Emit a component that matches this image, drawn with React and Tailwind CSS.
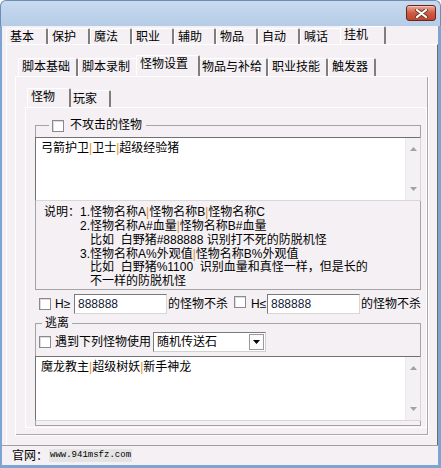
import React from 'react';

// --- Bot settings window (挂机 / 怪物设置 page) ---

const FONT = "font-['Liberation_Sans','Noto_Sans_CJK_SC',sans-serif]";

// renders "a|b|c" with the coloured separators seen in the edit boxes
const Piped = ({ text }) =>
    text.split('|').map((part, i) => (
        <React.Fragment key={i}>
            {i > 0 && <span className="text-[#e0942e]">|</span>}
            {part}
        </React.Fragment>
    ));

const Check = () => (
    <span className="inline-block w-[12px] h-[12px] shrink-0 bg-white border border-[#8a8a8a] shadow-[inset_1px_1px_0_#dcdcdc]" />
);

const ScrollArrows = () => (
    <div className="w-[15px] h-full bg-[#f3f1f3] border-l border-[#ebe8eb] flex flex-col justify-between items-center py-[9px]">
        <svg width="7" height="4" viewBox="0 0 7 4"><path d="M0 4 L3.5 0 L7 4 Z" fill="#a2a2a2" /></svg>
        <svg width="7" height="4" viewBox="0 0 7 4"><path d="M0 0 L7 0 L3.5 4 Z" fill="#a2a2a2" /></svg>
    </div>
);

const EditBox = ({ text, height }) => (
    <div className={`-mx-px flex bg-white border-t border-l border-[#707070] border-r border-r-[#d8d8d8] border-b border-b-[#d8d8d8] ${height}`}>
        <div className="flex-1 pl-[5px] pt-[3px] leading-[14px] text-black"><Piped text={text} /></div>
        <ScrollArrows />
    </div>
);

const TextInput = ({ value }) => (
    <div className="w-[93px] h-[20px] bg-white border border-t-[#7a7a7a] border-l-[#7a7a7a] border-r-[#d6d6d6] border-b-[#d6d6d6] pl-[3px] leading-[18px] text-[#101838]">
        {value}
    </div>
);

const Tab = ({ label, width, active, tall, short }) => (
    <div
        className={`${width} ${active ? `${tall} -mx-[2px] relative z-10` : short} shrink-0 bg-[#f4f0f4] border-l border-t border-white border-r-2 border-r-[#7e7e7e] rounded-t-[2px] pl-[3px] leading-[16px] text-black whitespace-nowrap`}
    >
        {label}
    </div>
);

const mainTabs = ['基本', '保护', '魔法', '职业', '辅助', '物品', '自动', '喊话', '挂机'];

const subTabs = [
    { name: '脚本基础', w: 'w-[60px]', aw: 'w-[64px]' },
    { name: '脚本录制', w: 'w-[60px]', aw: 'w-[64px]' },
    { name: '怪物设置', w: 'w-[60px]', aw: 'w-[64px]' },
    { name: '物品与补给', w: 'w-[70px]', aw: 'w-[74px]' },
    { name: '职业技能', w: 'w-[60px]', aw: 'w-[64px]' },
    { name: '触发器', w: 'w-[48px]', aw: 'w-[52px]' },
];

export default function App() {
    const activeMain = '挂机';
    const activeSub = '怪物设置';

    return (
        <div className={`w-[441px] h-[468px] flex flex-col overflow-hidden text-[12px] ${FONT}`}>
            {/* Title bar */}
            <div className="h-[26px] shrink-0 rounded-t-[6px] border-t border-x border-[#6f8db4] bg-gradient-to-b from-[#c8daef] to-[#b5cce7] flex justify-end items-start pt-[4px] pr-[4px]">
                <div className="w-[30px] h-[16px] rounded-[3px] border border-[#6a2418] bg-gradient-to-b from-[#e9a897] via-[#cf5a43] to-[#bd452f] flex items-center justify-center shadow-[inset_0_1px_0_#f3c7bb]">
                    <svg width="13" height="9" viewBox="0 0 13 9">
                        <path d="M2 1 L11 8 M11 1 L2 8" stroke="#6b3a30" strokeWidth="4" strokeLinecap="round" />
                        <path d="M2 1 L11 8 M11 1 L2 8" stroke="#ffffff" strokeWidth="2.2" strokeLinecap="round" />
                    </svg>
                </div>
            </div>

            {/* Window body */}
            <div className="flex-1 flex flex-col bg-[#f4f0f4] border-l-2 border-r-[3px] border-b-[3px] border-[#7ea4d2]">
                {/* Main tabs */}
                <div className="h-[18px] shrink-0 flex items-end pl-[4px]">
                    {mainTabs.map((t) => (
                        <Tab key={t} label={t} width={t === activeMain ? 'w-[46px]' : 'w-[42px]'} active={t === activeMain} tall="h-[18px]" short="h-[16px]" />
                    ))}
                </div>

                {/* Main panel */}
                <div className="ml-[4px] w-[432px] h-[401px] shrink-0 border-t border-l border-white border-r border-r-[#6c6c6c]">
                    <div className="mt-[10px] h-[21px] flex items-end pl-[11px]">
                        {subTabs.map((t) => (
                            <Tab key={t.name} label={t.name} width={t.name === activeSub ? t.aw : t.w} active={t.name === activeSub} tall="h-[21px]" short="h-[18px]" />
                        ))}
                    </div>

                    {/* Sub tab panel */}
                    <div className="ml-[8px] w-[414px] h-[360px] border-t border-l border-white border-r border-b border-[#6a6a6a] border-t-white border-l-white shadow-[inset_-1px_-1px_0_#a8a8a8]">
                        <div className="mt-[11px] h-[19px] flex items-end pl-[13px]">
                            <Tab label="怪物" width="w-[44px]" active tall="h-[19px]" short="h-[17px]" />
                            <Tab label="玩家" width="w-[42px]" short="h-[17px]" />
                        </div>

                        {/* Inner panel */}
                        <div className="ml-[9px] w-[402px] h-[321px] border-t border-l border-white border-r border-b border-[#7a7a7a] border-t-white border-l-white">
                            {/* Group: monsters not attacked */}
                            <div className="relative mt-[17px] ml-[9px] w-[386px] h-[165px] border border-[#a4a4a4] flex flex-col">
                                <div className="absolute left-[13px] -top-[7px] flex items-center gap-[6px] bg-[#f4f0f4] pl-[3px] pr-[4px] h-[13px]">
                                    <Check />
                                    <span className="leading-[13px]">不攻击的怪物</span>
                                </div>
                                <div className="h-[11px] shrink-0" />
                                <EditBox text="弓箭护卫|卫士|超级经验猪" height="h-[68px]" />
                                <div className="flex pt-[5px] pl-[8px] leading-[13.8px] text-black">
                                    <span className="w-[36px] shrink-0">说明：</span>
                                    <div className="flex flex-col">
                                        <span><Piped text="1.怪物名称A|怪物名称B|怪物名称C" /></span>
                                        <span><Piped text="2.怪物名称A#血量|怪物名称B#血量" /></span>
                                        <span className="pl-[10px]">比如&nbsp;&nbsp;白野猪#888888 识别打不死的防脱机怪</span>
                                        <span><Piped text="3.怪物名称A%外观值|怪物名称B%外观值" /></span>
                                        <span className="pl-[10px]">比如&nbsp;&nbsp;白野猪%1100&nbsp;&nbsp;识别血量和真怪一样，但是长的</span>
                                        <span className="pl-[10px]">不一样的防脱机怪</span>
                                    </div>
                                </div>
                            </div>

                            {/* HP filters */}
                            <div className="mt-[4px] h-[20px] flex items-center pl-[13px]">
                                <Check />
                                <span className="ml-[4px] w-[19px]">H≥</span>
                                <TextInput value="888888" />
                                <span className="ml-[1px]">的怪物不杀</span>
                                <span className="ml-[6px]"><Check /></span>
                                <span className="ml-[5px] w-[16px]">H≤</span>
                                <TextInput value="888888" />
                                <span className="ml-[1px]">的怪物不杀</span>
                            </div>

                            {/* Group: escape */}
                            <div className="relative mt-[9px] ml-[9px] w-[386px] h-[103px] border border-[#a4a4a4] flex flex-col">
                                <span className="absolute left-[6px] -top-[8px] bg-[#f4f0f4] px-[3px] leading-[14px]">逃离</span>
                                <div className="mt-[8px] h-[20px] flex items-center pl-[3px]">
                                    <Check />
                                    <span className="ml-[4px]">遇到下列怪物使用</span>
                                    <div className="ml-[2px] w-[113px] h-[20px] flex items-center bg-white border border-[#7a7a7a] border-r-[#d0d0d0] border-b-[#d0d0d0]">
                                        <span className="flex-1 pl-[3px] text-black">随机传送石</span>
                                        <div className="w-[15px] h-[16px] mr-[1px] flex items-center justify-center bg-[#fbfbfb] border border-[#9a9a9a]">
                                            <svg width="7" height="4" viewBox="0 0 7 4"><path d="M0 0 L7 0 L3.5 4 Z" fill="#000" /></svg>
                                        </div>
                                    </div>
                                </div>
                                <div className="mt-[4px]">
                                    <EditBox text="魔龙教主|超级树妖|新手神龙" height="h-[65px]" />
                                </div>
                            </div>
                        </div>
                    </div>
                </div>

                {/* Footer */}
                <div className="h-[20px] shrink-0 border-t border-[#a0a0a0] flex items-center pl-[10px]">
                    <span className="text-black">官网：</span>
                    <span className="ml-[1px] bg-[#e4e4e4] px-[1px] leading-[13px] text-[9px] text-black font-['Liberation_Mono',monospace]">www.941msfz.com</span>
                </div>
            </div>
        </div>
    );
}
